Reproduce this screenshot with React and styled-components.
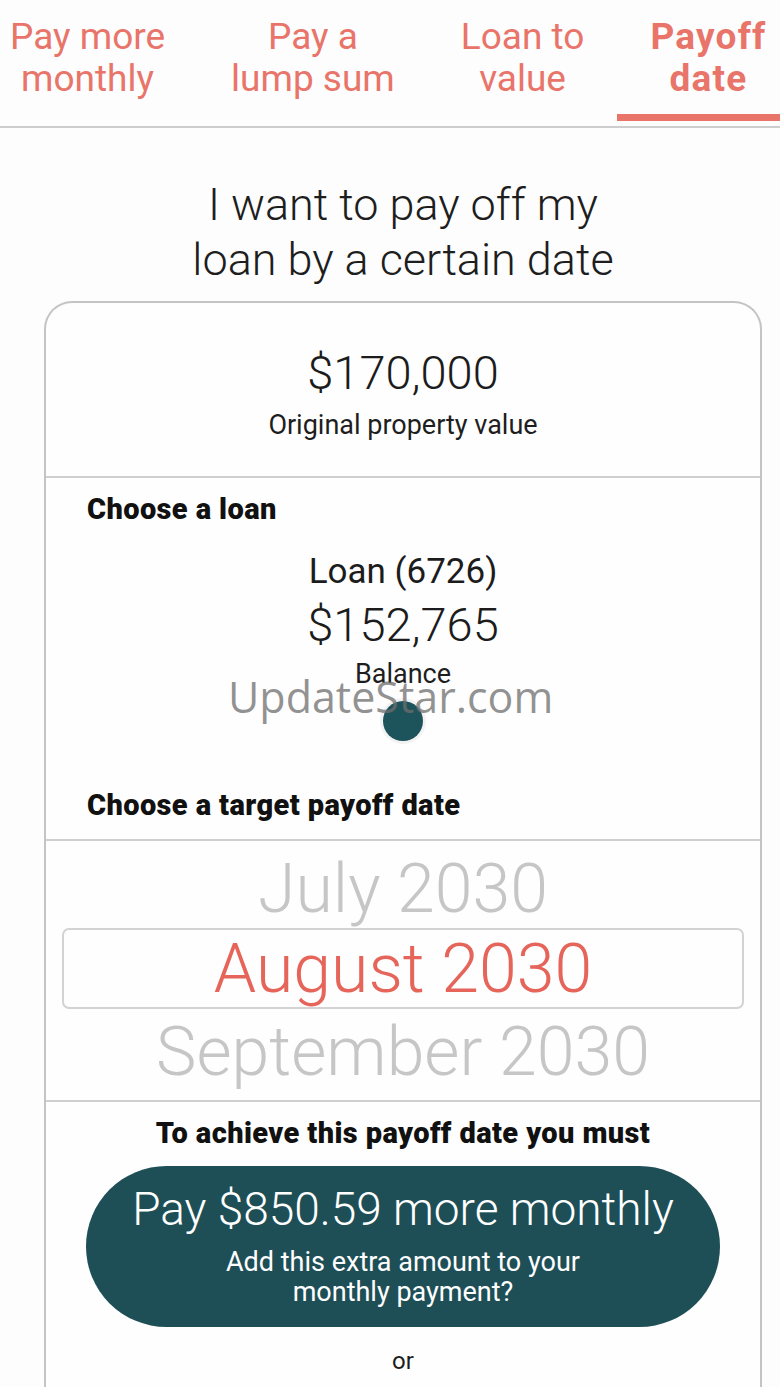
import styled, { createGlobalStyle } from "styled-components";

const GlobalStyle = createGlobalStyle`
  html, body {
    margin: 0;
    padding: 0;
    background: #fdfdfd;
    font-family: Roboto, "Liberation Sans", sans-serif;
    color: #1c1c1c;
  }
`;

const Page = styled.div`
  width: 780px;
  height: 1387px;
  overflow: hidden;
  position: relative;
`;

const TabBar = styled.nav`
  display: flex;
  height: 126px;
  border-bottom: 2px solid #cdcdcd;
  margin-left: -23px;
`;

const Tab = styled.div`
  flex: none;
  padding: 16px 33px 0;
  text-align: center;
  font-size: 37px;
  line-height: 42px;
  color: #e8746a;
  font-weight: ${(p) => (p.$active ? 700 : 400)};
  letter-spacing: ${(p) => (p.$active ? "1.2px" : "0")};
  border-bottom: 7px solid ${(p) => (p.$active ? "#e8746a" : "transparent")};
  margin-bottom: 5px;
  box-sizing: border-box;
  white-space: nowrap;
`;

const Heading = styled.h1`
  margin: 49px 0 0;
  padding-left: 26px;
  text-align: center;
  font-size: 45px;
  line-height: 55px;
  font-weight: 300;
  color: #1e1e1e;
`;

const Card = styled.section`
  margin: 14px 18px 0 44px;
  border: 2px solid #c4c4c4;
  border-bottom: none;
  border-radius: 28px 28px 0 0;
  background: #fefefe;
`;

const Section = styled.div`
  display: flex;
  flex-direction: column;
  align-items: ${(p) => (p.$left ? "stretch" : "center")};
  height: ${(p) => p.$h}px;
  box-sizing: border-box;
  padding: ${(p) => p.$pad || "0"};
  border-top: ${(p) => (p.$first ? "none" : "2px solid #cfcfcf")};
`;

const BigValue = styled.div`
  font-size: 47px;
  line-height: 52px;
  font-weight: 300;
  text-align: center;
  margin-top: ${(p) => p.$mt || 0}px;
`;

const Caption = styled.div`
  font-size: ${(p) => p.$size || 27}px;
  line-height: ${(p) => (p.$size || 27) + 5}px;
  text-align: center;
  color: #1e1e1e;
  margin-top: ${(p) => p.$mt || 0}px;
`;

const Label = styled.div`
  font-size: 29px;
  line-height: 30px;
  font-weight: 900;
  letter-spacing: 0.4px;
  color: #111;
  text-align: ${(p) => (p.$center ? "center" : "left")};
  margin-top: ${(p) => p.$mt || 0}px;
`;

const LoanName = styled.div`
  font-size: 35px;
  line-height: 40px;
  text-align: center;
  font-weight: 400;
  margin-top: 28px;
`;

const Dot = styled.div`
  width: 40px;
  height: 40px;
  border-radius: 50%;
  background: #1d535b;
  box-shadow: 0 0 0 3px #f2f2f2;
  align-self: center;
  margin-top: 11px;
`;

const PickerItem = styled.div`
  font-size: 68px;
  line-height: 82px;
  font-weight: 300;
  text-align: center;
  color: ${(p) => (p.$selected ? "#e6655b" : "#c6c6c6")};
`;

const PickerSelection = styled.div`
  margin: -2px 16px 2px;
  border: 2px solid #d3d3d3;
  border-radius: 7px;
  height: 81px;
  box-sizing: border-box;
  display: flex;
  align-items: center;
  justify-content: center;
`;

const PayButton = styled.button`
  width: 634px;
  height: 161px;
  border: none;
  border-radius: 81px;
  background: #1e4f57;
  color: #fff;
  font-family: inherit;
  display: flex;
  flex-direction: column;
  align-items: center;
  justify-content: center;
  padding: 0 0 3px;
  margin-top: 18px;
`;

const ButtonTitle = styled.span`
  font-size: 46px;
  line-height: 52px;
  font-weight: 300;
`;

const ButtonText = styled.span`
  font-size: 27px;
  line-height: 30px;
  margin-top: 12px;
`;

const Watermark = styled.div`
  position: absolute;
  left: 228px;
  top: 670px;
  font-family: "Open Sans", Roboto, sans-serif;
  font-size: 43px;
  line-height: 54px;
  color: rgba(110, 110, 110, 0.75);
  pointer-events: none;
`;

export default function App() {
  return (
    <Page>
      <GlobalStyle />
      <TabBar>
        <Tab>Pay more<br />monthly</Tab>
        <Tab>Pay a<br />lump sum</Tab>
        <Tab>Loan to<br />value</Tab>
        <Tab $active>Payoff<br />date</Tab>
      </TabBar>
      <Heading>
        I want to pay off my
        <br />
        loan by a certain date
      </Heading>
      <Card>
        <Section $first $h={173} $pad="44px 0 0">
          <BigValue>$170,000</BigValue>
          <Caption $mt={10}>Original property value</Caption>
        </Section>
        <Section $left $h={363} $pad="16px 41px 0">
          <Label>Choose a loan</Label>
          <LoanName>Loan (6726)</LoanName>
          <BigValue $mt={7}>$152,765</BigValue>
          <Caption $mt={7}>Balance</Caption>
          <Dot />
          <Label $mt={49}>Choose a target payoff date</Label>
        </Section>
        <Section $left $h={261} $pad="7px 0 0">
          <PickerItem>July 2030</PickerItem>
          <PickerSelection>
            <PickerItem $selected>August 2030</PickerItem>
          </PickerSelection>
          <PickerItem>September 2030</PickerItem>
        </Section>
        <Section $h={300} $pad="16px 0 0">
          <Label $center>To achieve this payoff date you must</Label>
          <PayButton>
            <ButtonTitle>Pay $850.59 more monthly</ButtonTitle>
            <ButtonText>
              Add this extra amount to your
              <br />
              monthly payment?
            </ButtonText>
          </PayButton>
          <Caption $size={24} $mt={20}>or</Caption>
        </Section>
      </Card>
      <Watermark>UpdateStar.com</Watermark>
    </Page>
  );
}
